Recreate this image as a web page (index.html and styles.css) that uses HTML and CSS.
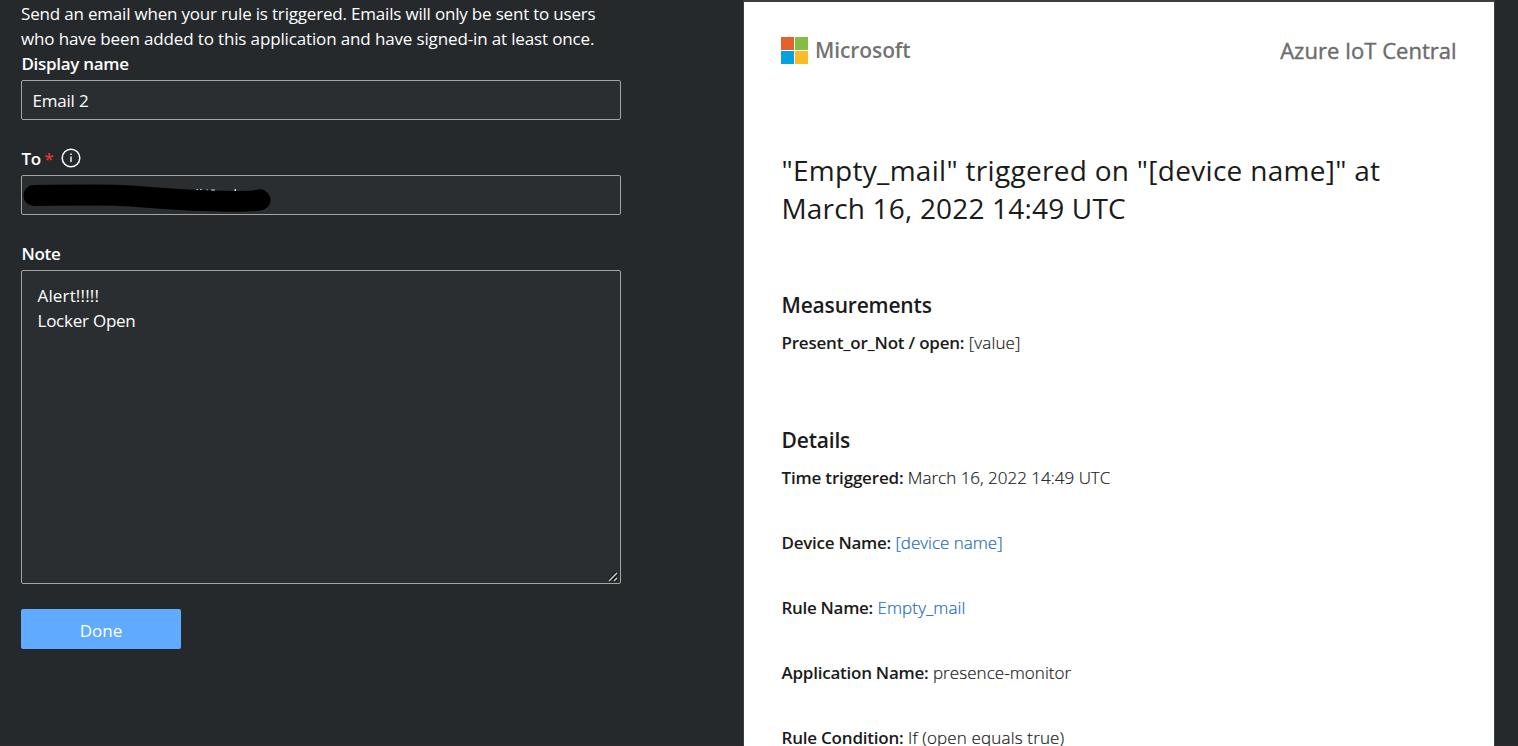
FILE: index.html
```
<!DOCTYPE html>
<html lang="en">
<head>
<meta charset="utf-8">
<title>Email action</title>
<link rel="stylesheet" href="styles.css">
</head>
<body>
<main class="page">
  <section class="form">
    <p class="intro"><span class="l1">Send an email when your rule is triggered. Emails will only be sent to users</span><br><span class="l2">who have been added to this application and have signed-in at least once.</span></p>
    <div class="field">
      <div class="label">Display name</div>
      <div class="input">Email 2</div>
    </div>
    <div class="field">
      <div class="label"><span>To</span><span class="required">*</span>
        <svg class="info" viewBox="0 0 20 20" width="20" height="20"><circle cx="10" cy="10" r="8.8" fill="none" stroke="#fff" stroke-width="1.5"/><path d="M10 8.4v5.6M10 5.6v1.5" stroke="#fff" stroke-width="1.4"/></svg>
      </div>
      <div class="input input-to">
        <svg class="scribble" viewBox="0 0 260 38" width="260" height="38"><path d="M174.500 14h1.500M178 14h1.500M184.500 14.300h1.500M189 14.500h4M212.500 14h1.500" stroke="#d5d6d6" stroke-width="1.800"/><path d="M12 19.500C50 19 88 19 98 19.500C125 20.500 145 23.500 180 24.500C205 25.500 232 25.500 238 23.800" fill="none" stroke="#000" stroke-width="21" stroke-linecap="round"/></svg>
      </div>
    </div>
    <div class="field">
      <div class="label">Note</div>
      <div class="textarea"><span class="alert">Alert!!!!!</span><br><span class="locker">Locker Open</span>
        <svg class="grip" viewBox="0 0 10 10" width="10" height="10"><path d="M1 9L9 1M6 9L9 6" stroke="#111" stroke-width="3.600"/><path d="M1 9L9 1M6 9L9 6" stroke="#ccc" stroke-width="1.600"/></svg>
      </div>
    </div>
    <button class="done">Done</button>
  </section>
  <article class="mail">
    <header class="brand">
      <div class="microsoft">
        <svg viewBox="0 0 27 27" width="27" height="27"><path fill="#e4602c" d="M0 0h13v13H0z"/><path fill="#83bd41" d="M14 0h13v13H14z"/><path fill="#05a3de" d="M0 14h13v13H0z"/><path fill="#fbbb22" d="M14 14h13v13H14z"/></svg>
        <span>Microsoft</span>
      </div>
      <span class="product">Azure IoT Central</span>
    </header>
    <div class="content">
      <h1 class="title"><span class="subject">"Empty_mail" triggered on "[device name]" at</span><br><span class="date">March 16, 2022 14:49 UTC</span></h1>
      <h2 class="heading">Measurements</h2>
      <p class="row"><b>Present_or_Not / open:</b> <span class="loose">[value]</span></p>
      <h2 class="heading details">Details</h2>
      <p class="row"><b class="time">Time triggered:</b> <span>March 16, 2022 14:49 UTC</span></p>
      <p class="row"><b class="device">Device Name:</b> <a>[device name]</a></p>
      <p class="row"><b class="rule">Rule Name:</b> <a class="loose">Empty_mail</a></p>
      <p class="row"><b class="app">Application Name:</b> <span class="app-value">presence-monitor</span></p>
      <p class="row"><b>Rule Condition:</b> <span class="loose">If (open equals true)</span></p>
    </div>
  </article>
</main>
</body>
</html>
```
FILE: styles.css
```
* { box-sizing: border-box; }
body {
  margin: 0;
  height: 746px;
  overflow: hidden;
  background: #25292c;
  color: #fff;
  font: 17px/25px "Open Sans", "Noto Sans", sans-serif;
}
.page {
  display: flex;
  width: 1518px;
  height: 746px;
  overflow: hidden;
  background: linear-gradient(#30262f, #30262f) bottom / 100% 1px no-repeat;
}
.form { width: 743px; padding: 1px 0 0 21px; flex: none; }
.intro { margin: 0; white-space: nowrap; }
.l1 { letter-spacing: -0.19px; }
.l2 { letter-spacing: -0.14px; }
.field { width: 600px; margin-bottom: 26px; }
.label {
  height: 25px;
  margin-bottom: 4px;
  padding-left: 0.4px;
  display: flex;
  align-items: center;
  font-weight: 600;
  letter-spacing: -0.3px;
}
.required { color: #f0302c; margin-left: 3.500px; }
.info { margin: -2px 0 0 7.500px; }
.input {
  height: 40px;
  border: 1px solid #a2a4a6;
  border-radius: 2px;
  background: #2a2e31;
  padding: 7px 10.500px;
  letter-spacing: -0.2px;
}
.input-to { padding: 0; }
.scribble { display: block; }
.textarea {
  position: relative;
  height: 314px;
  border: 1px solid #a2a4a6;
  border-radius: 2px;
  background: #2a2e31;
  padding: 12px 15.500px;
}
.alert { letter-spacing: 0.15px; }
.locker { letter-spacing: -0.24px; }
.grip { position: absolute; right: 2px; bottom: 1px; }
.done {
  display: block;
  margin-top: -1px;
  width: 160px;
  height: 40px;
  padding: 2px 0 0;
  border: 0;
  border-radius: 2px;
  background: #60aaff;
  color: #fff;
  font: inherit;
}
.mail {
  width: 752px;
  height: 760px;
  flex: none;
  background: #fff;
  color: #1b1b1b;
  border: 1px solid #3c3d3e;
  border-top-width: 2px;
  padding: 35px 37.500px 0 37px;
}
.brand { display: flex; justify-content: space-between; height: 27px; align-items: center; color: #6c6c6c; }
.microsoft { display: flex; gap: 7px; align-items: center; font-size: 21px; font-weight: 600; color: #737373; letter-spacing: -0.1px; }
.product { font-size: 22px; -webkit-text-stroke: 0.4px #6c6c6c; }
.content { padding-left: 0.5px; }
.title { margin: 87px 0 0; font-size: 28px; line-height: 38px; font-weight: 400; white-space: nowrap; }
.subject { letter-spacing: 0.3px; }
.date { letter-spacing: 0.18px; }
.heading { margin: 63px 0 9px; font-size: 21px; line-height: 31px; font-weight: 600; letter-spacing: -0.18px; }
.details { margin-top: 70px; }
.row { margin: 0 0 40px; white-space: nowrap; font-weight: 300; }
.row span, .row a { -webkit-text-stroke: 0.2px currentColor; }
.row b { font-weight: 600; letter-spacing: -0.21px; }
.row a { color: #1c6dbb; }
.row .time { letter-spacing: -0.18px; }
.row .device { letter-spacing: -0.26px; }
.row .rule { letter-spacing: -0.3px; }
.row .app { letter-spacing: -0.24px; }
.app-value { letter-spacing: 0.06px; }
.loose { letter-spacing: 0.15px; }
```
